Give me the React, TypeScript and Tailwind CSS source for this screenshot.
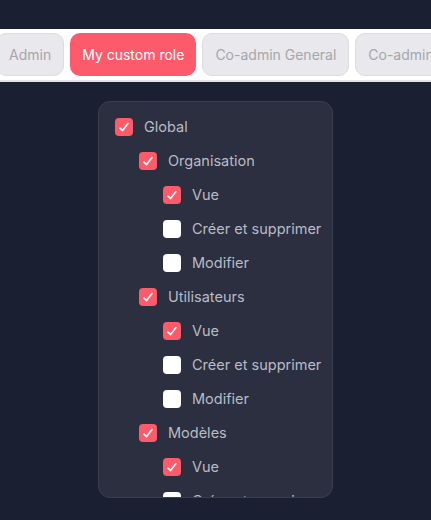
import { useState } from "react";

type Node = { label: string; checked: boolean; level: number };

const roles = ["Admin", "My custom role", "Co-admin General", "Co-admin Finance"];

const initial: Node[] = [
  { label: "Global", checked: true, level: 0 },
  { label: "Organisation", checked: true, level: 1 },
  { label: "Vue", checked: true, level: 2 },
  { label: "Créer et supprimer", checked: false, level: 2 },
  { label: "Modifier", checked: false, level: 2 },
  { label: "Utilisateurs", checked: true, level: 1 },
  { label: "Vue", checked: true, level: 2 },
  { label: "Créer et supprimer", checked: false, level: 2 },
  { label: "Modifier", checked: false, level: 2 },
  { label: "Modèles", checked: true, level: 1 },
  { label: "Vue", checked: true, level: 2 },
  { label: "Créer et supprimer", checked: false, level: 2 },
  { label: "Modifier", checked: false, level: 2 },
];

const indent = ["pl-0", "pl-6", "pl-12"];

function Check({ checked }: { checked: boolean }) {
  return (
    <span
      className={
        checked
          ? "flex h-[18px] w-[18px] shrink-0 items-center justify-center rounded-[4px] bg-[#fd5a6a]"
          : "flex h-[18px] w-[18px] shrink-0 items-center justify-center rounded-[4px] bg-white"
      }
    >
      {checked && (
        <svg width="12" height="12" viewBox="0 0 12 12" fill="none">
          <path
            d="M2 7.2 L4.6 9.6 L10 2.6"
            stroke="white"
            strokeWidth="1.6"
            strokeLinecap="round"
            strokeLinejoin="round"
          />
        </svg>
      )}
    </span>
  );
}

export default function App() {
  const [items, setItems] = useState(initial);
  const [active, setActive] = useState(1);

  return (
    <div className="h-[520px] w-[431px] overflow-hidden bg-[#1b1f32] pt-[29px] font-['Inter',sans-serif]">
      <div className="flex h-[53px] items-center overflow-hidden border-b-2 border-[#e4e4e8] bg-white">
        <div className="-ml-[4px] flex gap-[6px]">
          {roles.map((r, i) => (
            <button
              key={r}
              onClick={() => setActive(i)}
              className={
                i === active
                  ? "h-[43px] shrink-0 whitespace-nowrap rounded-[10px] bg-[#fd5b6b] px-3 text-[14px] text-white"
                  : "h-[43px] shrink-0 whitespace-nowrap rounded-[10px] border border-[#dcdce1] bg-[#e9e8ec] px-3 text-[14px] text-[#a6a6ad]"
              }
            >
              {r}
            </button>
          ))}
        </div>
      </div>
      <div className="mt-[19px] flex justify-center">
        <div className="h-[397px] w-[235px] overflow-hidden rounded-[12px] border border-[#3a3e4e] bg-[#2b2f3f] px-4 pt-4">
          <ul className="flex flex-col gap-4">
            {items.map((it, i) => (
              <li key={i} className={indent[it.level]}>
                <label
                  className="flex cursor-pointer items-center gap-[11px] text-[14.5px] leading-[18px] text-[#b9bbc5]"
                  onClick={() =>
                    setItems(items.map((x, j) => (j === i ? { ...x, checked: !x.checked } : x)))
                  }
                >
                  <Check checked={it.checked} />
                  <span className="whitespace-nowrap">{it.label}</span>
                </label>
              </li>
            ))}
          </ul>
        </div>
      </div>
    </div>
  );
}
